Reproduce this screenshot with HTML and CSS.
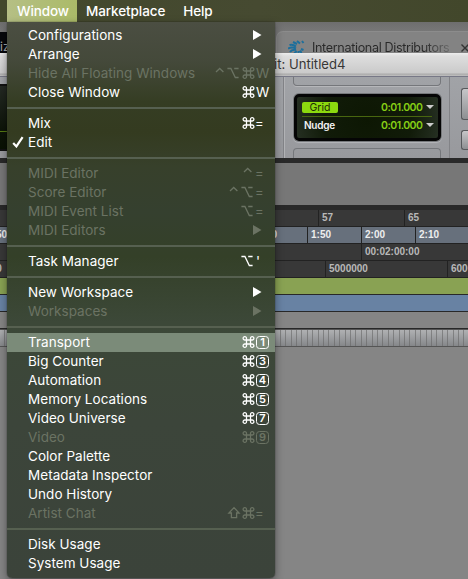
FILE: index.html
```html
<!DOCTYPE html>
<html lang="en">
<head>
<meta charset="utf-8">
<title>Window menu</title>
<link rel="stylesheet" href="styles.css">
</head>
<body>
<svg class="defs" aria-hidden="true">
  <symbol id="cmd" viewBox="0 0 14 14"><path d="M5.5 5H9.5V9H5.5ZM5.5 5H3.9A1.7 1.7 0 1 1 5.5 3.4ZM9.5 5V3.4A1.7 1.7 0 1 1 11.1 5ZM9.5 9H11.1A1.7 1.7 0 1 1 9.5 10.6ZM5.5 9V10.6A1.7 1.7 0 1 1 3.9 9Z"/></symbol>
  <symbol id="opt" viewBox="0 0 14 14"><path d="M.4 2.5H3.9L8.3 11.5H11.6M7.2 2.5H11.6"/></symbol>
  <symbol id="ctrl" viewBox="0 0 14 14"><path d="M3 6L6.7 2.5L10.4 6"/></symbol>
  <symbol id="shift" viewBox="0 0 14 14"><path d="M7 1.6L1.9 7H4.4V11.7H9.6V7H12.1Z"/></symbol>
  <symbol id="arrow" viewBox="0 0 14 14"><path class="solid" d="M0 2V12L8.5 7Z"/></symbol>
</svg>
<div class="screen">
  <nav class="menubar"><span class="open">Window</span><span>Marketplace</span><span>Help</span></nav>

  <div class="tabs">
    <span class="iz">iz</span>
    <div class="tab">
      <svg class="logo" viewBox="0 0 17 15"><path d="M5 2L9 4M9 1L12 3.5M1.5 5Q5 4 8 6.500M14 1L15.500 3M0 8.500Q4 6.500 8 8.500M2 12Q4 9 8 10M6 14Q7 11.500 9 11.500M10.500 14L10.500 11M13.500 13L12 10.500M15.500 10L13 9"/></svg>
      <span class="tabname">International Distributors</span>
      <svg class="close" viewBox="0 0 8 8"><path d="M.5.5L7.5 7.5M7.5.5L.5 7.5"/></svg>
    </div>
  </div>
  <div class="title">it: Untitled4</div>
  <div class="toolbar">
    <div class="leftlcd"></div>
    <div class="group">
      <div class="slot top"></div>
      <div class="lcd">
        <div class="line first"><b class="grid">Grid</b><span class="num">0:01.000</span><i class="down"></i></div>
        <div class="line"><b class="nudge">Nudge</b><span class="num">0:01.000</span><i class="down"></i></div>
      </div>
      <div class="slot bottom"></div>
    </div>
    <div class="buttons"><i class="big"></i><i class="small"></i></div>
  </div>
  <div class="edge"></div>
  <div class="blank"></div>
  <div class="edge"></div>
  <div class="ruler"><span class="tick bar first">&nbsp;</span><span class="tick bar">57</span><span class="tick bar">65</span></div>
  <div class="ruler time"><span class="tick start">0:50</span><span class="tick min">1:40</span><span class="tick min">1:50</span><span class="tick min">2:00</span><span class="tick min">2:10</span></div>
  <div class="ruler"><span class="tick code">00:02:00:00</span></div>
  <div class="ruler"><span class="tick sample0">2000000</span><span class="tick sample">5000000</span><span class="tick sample">6000000</span></div>
  <div class="lane green"></div>
  <div class="lane blue"></div>
  <div class="lane gray"></div>
  <div class="stripes"></div>
  <div class="rest"></div>

  <div class="menu">
    <div class="item">Configurations<span class="keys"><svg><use href="#arrow"/></svg></span></div>
    <div class="item">Arrange<span class="keys"><svg><use href="#arrow"/></svg></span></div>
    <div class="item off">Hide All Floating Windows<span class="keys"><svg><use href="#ctrl"/></svg><svg><use href="#opt"/></svg><svg><use href="#cmd"/></svg><em>W</em></span></div>
    <div class="item">Close Window<span class="keys"><svg><use href="#cmd"/></svg><em>W</em></span></div>
    <hr>
    <div class="item">Mix<span class="keys"><svg><use href="#cmd"/></svg><em class="eq">=</em></span></div>
    <div class="item"><svg class="check" viewBox="0 0 12 12"><path d="M1.2 7L4.4 10.4L10.6 1.2"/></svg>Edit</div>
    <hr>
    <div class="item off">MIDI Editor<span class="keys"><svg><use href="#ctrl"/></svg><em class="eq">=</em></span></div>
    <div class="item off">Score Editor<span class="keys"><svg><use href="#ctrl"/></svg><svg><use href="#opt"/></svg><em class="eq">=</em></span></div>
    <div class="item off">MIDI Event List<span class="keys"><svg><use href="#opt"/></svg><em class="eq">=</em></span></div>
    <div class="item off">MIDI Editors<span class="keys"><svg><use href="#arrow"/></svg></span></div>
    <hr>
    <div class="item">Task Manager<span class="keys"><svg><use href="#opt"/></svg><em>'</em></span></div>
    <hr>
    <div class="item">New Workspace<span class="keys"><svg><use href="#arrow"/></svg></span></div>
    <div class="item off">Workspaces<span class="keys"><svg><use href="#arrow"/></svg></span></div>
    <hr>
    <div class="item active">Transport<span class="keys"><svg><use href="#cmd"/></svg><kbd>1</kbd></span></div>
    <div class="item">Big Counter<span class="keys"><svg><use href="#cmd"/></svg><kbd>3</kbd></span></div>
    <div class="item">Automation<span class="keys"><svg><use href="#cmd"/></svg><kbd>4</kbd></span></div>
    <div class="item">Memory Locations<span class="keys"><svg><use href="#cmd"/></svg><kbd>5</kbd></span></div>
    <div class="item">Video Universe<span class="keys"><svg><use href="#cmd"/></svg><kbd>7</kbd></span></div>
    <div class="item off">Video<span class="keys"><svg><use href="#cmd"/></svg><kbd>9</kbd></span></div>
    <div class="item">Color Palette</div>
    <div class="item">Metadata Inspector</div>
    <div class="item">Undo History</div>
    <div class="item off">Artist Chat<span class="keys"><svg><use href="#shift"/></svg><svg><use href="#cmd"/></svg><em class="eq">=</em></span></div>
    <hr>
    <div class="item">Disk Usage</div>
    <div class="item">System Usage</div>
  </div>
</div>
</body>
</html>
```
FILE: styles.css
```css
* { box-sizing: border-box; }
body { margin: 0; }
.defs { position: absolute; width: 0; height: 0; }
.screen {
  position: relative; width: 468px; height: 579px; overflow: hidden;
  display: flex; flex-direction: column;
  font-family: Inter, "Liberation Sans", sans-serif; background: #868686;
}
.screen > * { flex: none; }
svg { fill: none; stroke: currentColor; }
.solid { fill: currentColor; stroke: none; }

.menubar {
  height: 22px; padding-left: 7px; display: flex; color: #fff;
  background: linear-gradient(90deg, #42482c, #464a31 55%, #42472b);
  font-size: 13.5px; font-weight: 500; line-height: 22px; letter-spacing: -.1px;
}
.menubar span { padding: 0 9px; }
.menubar .open { width: 70px; padding-left: 10px; background: linear-gradient(90deg, #b5bf85, #abbb68); }

.tabs { height: 31px; display: flex; background: linear-gradient(#6e6e6e, #777 9px, #7b7b7b); }
.iz { width: 7px; height: 21px; margin-top: 10px; overflow: hidden; background: #07080c; color: #aaa; font-size: 12px; line-height: 30px; }
.tab {
  height: 22px; margin: 9px 0 0 269px; padding: 8px 0 0 12px; flex: 1; overflow: hidden;
  display: flex; background: #838383; border: 1px solid #8c8c8c; border-width: 1px 0 0 1px; border-radius: 7px 0 0 0;
}
.tab > * { flex: none; }
.logo { width: 17px; height: 15px; margin-left: -1px; color: #1d6f9c; stroke-width: 2; }
.tabname {
  width: 142px; margin: -1px 0 0 7px; white-space: nowrap; font-size: 12.6px; line-height: 18px; letter-spacing: -.35px; color: transparent;
  background: linear-gradient(90deg, #292929 78%, #777); background-clip: text;
}
.close { width: 8px; height: 8px; margin: 4px 0 0 7px; color: #333; stroke-width: 1.4; }

.title {
  height: 23px; padding-left: 274px; color: #373737; white-space: nowrap;
  background: linear-gradient(#ededed, #dedede 3px, #cacaca 20px, #aaa 21px, #c0c0c0);
  font-size: 13.4px; line-height: 23px; letter-spacing: -.4px;
}
.title { letter-spacing: 0; font-size: 13.1px; }
.toolbar { height: 82px; display: flex; background: linear-gradient(#a1a3a7, #98999d); border-top: 1px solid #777886; }
.leftlcd { width: 7px; height: 67px; margin: 7px 0 8px; background: linear-gradient(#242923, #0d1408 45px, #577b13 45px 46px, #0d1408 46px, #091103); border: solid #111; border-width: 2px 0; }
.group { width: 167px; margin-left: 276px; padding: 0 9px; border: 1px solid #828387; border-width: 0 1px; box-shadow: inset 1px 0 #b2b3b6; }
.slot { width: 148px; border: 1px solid #75777b; }
.top { height: 9px; border-top: 0; border-radius: 0 0 4px 4px; box-shadow: 0 1px #b6b7ba; }
.bottom { height: 10px; margin-top: 7px; border-bottom: 0; border-radius: 4px 4px 0 0; }
.lcd {
  width: 147px; height: 47px; margin: 8px 0 0 1px; padding: 5px 7px 3px 5px;
  background: radial-gradient(circle at 50% 55%, #0d1703, #111b09 60%, #263023);
  border: 3px solid #050505; border-radius: 5px; box-shadow: 0 0 0 1px #77797c, 0 1px 1px 1px #b5b6ba;
}
.line { height: 17px; display: flex; }
.line > * { flex: none; }
.line.first { height: 15px; width: 130px; border-bottom: 1px solid #48660f; }
.grid { width: 36px; height: 11px; border-radius: 2px; background: #8cda0f; color: #1c2d05; text-align: center; font-size: 10.5px; font-weight: 400; line-height: 11px; }
.nudge { width: 36px; padding: 1px 0 0 2px; color: #f3f3f3; font-size: 10px; font-weight: 600; line-height: 15px; letter-spacing: -.25px; }
.num { width: 43px; margin-left: 43px; color: #86ce15; font-size: 10.5px; font-weight: 600; line-height: 11px; letter-spacing: -.5px; }
.line:not(.first) .num { line-height: 17px; }
.down { height: 0; margin: 3px 0 0 2px; border: solid transparent; border-width: 4px 4px 0; border-top-color: #ccc; }
.line:not(.first) .down { margin-top: 6px; }
.buttons { flex: 1; padding: 11px 0 0 11px; }
.buttons i { display: block; border: 1px solid #56585b; border-right: 0; border-radius: 3px 0 0 3px; background: linear-gradient(#c6c6c8, #8d8f92); }
.big { height: 32px; }
.small { height: 20px; margin-top: 10px; }

.edge { height: 5px; background: #292929; }
.blank { height: 42px; background: #777; }
.ruler {
  height: 17px; display: flex; overflow: hidden; border-bottom: 1px solid #222; background: #383838; color: #b9b9b9;
  font: bold 10px/15px "Liberation Sans", sans-serif;
}
.tick { flex: none; padding-left: 3px; border-left: 1px solid #222; }
.bar { width: 86px; }
.bar.first { margin-left: 232px; }
.time { background: #67707c; color: #eee; }
.start { width: 54px; margin-left: -17px; }
.min { width: 54px; }
.start + .min { margin-left: 216px; }
.code { margin-left: 361px; }
.sample0 { width: 122px; margin-left: -41px; }
.sample { width: 122px; }
.sample0 + .sample { margin-left: 244px; }
.lane { height: 17px; border-bottom: 1px solid #282828; }
.green { background: #89a253; }
.blue { background: #6882a3; }
.gray { background: #858585; }
.stripes { height: 18px; border: solid #555; border-width: 1px 0; background: repeating-linear-gradient(90deg, transparent 0 4.4px, #6669 4.4px 5.4px), linear-gradient(#b0b1b3, #85878a); }
.rest { flex: 1; background: #858585; }

.menu {
  position: absolute; left: 7px; top: 22px; width: 268px; height: 556px; padding: 4px 0;
  background: linear-gradient(#4b4e42 0, #44493a 40px, #353d23 80px, #343b20 110px, #37402b 145px, #35402f 190px, #344028 235px, #3c4838 300px, #3c453a 400px, #3b433a);
  border-radius: 0 0 5px 5px; box-shadow: 0 3px 9px #0006, 0 0 1px #000;
  font-size: 13.5px; line-height: 19px; letter-spacing: .03px; color: #fff;
}
.item { height: 19px; padding: 0 6px 0 21px; display: flex; justify-content: space-between; white-space: nowrap; }
.item:has(.check) { padding-left: 5px; justify-content: flex-start; }
.check { width: 12px; height: 12px; margin: 3px 4px 0 0; stroke-width: 2.2; }
.off { color: #6b7363; }
.active { background: #7b8b79; }
.menu hr { height: 2px; margin: 5px 0; border: 0; background: #566050; }
.keys { display: flex; }
.keys svg { width: 14px; height: 14px; margin-top: 2px; stroke-width: 1.3; }
.keys svg:only-child { margin-right: 2px; }
.keys em { width: 14px; font-style: normal; padding-left: 1px; letter-spacing: 0; }
.keys .eq { padding-left: 0; font-size: 13px; }
.keys kbd {
  width: 13px; height: 13px; margin: 3px 0 0 1px; border: 1px solid; border-radius: 3.5px;
  font: 600 11px/11px Inter, sans-serif; letter-spacing: 0; text-align: center;
}
```
